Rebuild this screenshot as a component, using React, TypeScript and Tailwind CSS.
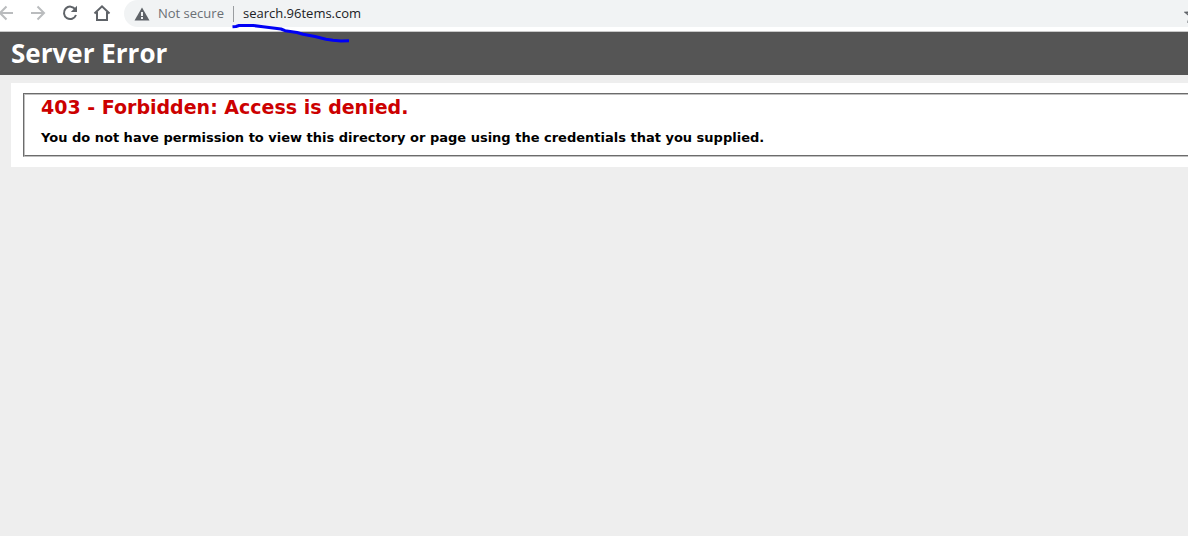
import type { ReactNode } from "react";

interface NavButtonProps {
  label: string;
  disabled?: boolean;
  children: ReactNode;
}

function NavButton({ label, disabled = false, children }: NavButtonProps) {
  return (
    <button
      type="button"
      aria-label={label}
      disabled={disabled}
      className="grid h-[26px] w-8 shrink-0 place-items-center text-[#5f6368] disabled:text-[#babcbe]"
    >
      <svg width="20" height="20" viewBox="0 0 20 20" fill="none" stroke="currentColor" strokeWidth="2">
        {children}
      </svg>
    </button>
  );
}

function Toolbar() {
  return (
    <header className="relative flex h-8 items-start border-b border-[#c8c8c8] bg-white">
      <nav className="-ml-2.5 flex pr-1.5" aria-label="Browser navigation">
        <NavButton label="Back" disabled>
          <path d="M17 10H4M10.5 3.5L4 10l6.500 6.500" />
        </NavButton>
        <NavButton label="Forward" disabled>
          <path d="M3 10h13M9.500 3.500L16 10l-6.500 6.500" />
        </NavButton>
        <NavButton label="Reload">
          <path d="M15.300 6.300A6.200 6.200 0 1 0 16 12" />
          <path d="M17 2.800V9h-6.200z" fill="currentColor" stroke="none" />
        </NavButton>
        <NavButton label="Home">
          <path d="M2.500 10.500L10 3.300l7.500 7.200M5 9v8h10V9" />
        </NavButton>
      </nav>

      <div className="flex h-[27px] min-w-0 flex-1 items-center overflow-hidden rounded-l-full bg-[#f1f3f4] pl-2.5 font-['Open_Sans',sans-serif] text-[13px]">
        <svg width="16" height="14" viewBox="0 0 16 14" className="shrink-0" aria-hidden="true">
          <path d="M8 0.500L15.500 13.500H0.500z" fill="#5f6368" />
          <path d="M7 5h2v4H7zM7 10h2v2H7z" fill="#f1f3f4" />
        </svg>
        <span className="ml-2 shrink-0 text-[#6b6f74]">Not secure</span>
        <span className="ml-[9px] h-4 w-px shrink-0 bg-[#9a9da0]" />
        <input
          type="text"
          aria-label="Address"
          defaultValue="search.96tems.com"
          className="ml-[9px] min-w-0 flex-1 bg-transparent text-[#202124] outline-none"
        />
        <button type="button" aria-label="Bookmark this page" className="-mr-3.5 shrink-0">
          <svg width="18" height="18" viewBox="0 0 18 18" fill="none" stroke="#5f6368" strokeWidth="1.6">
            <path d="M9 2l2 5 5.500.4-4.200 3.500 1.300 5.300L9 13.300l-4.600 2.900 1.300-5.300L1.500 7.400 7 7z" />
          </svg>
        </button>
      </div>

      {/* pen stroke under the address */}
      <svg
        width="120"
        height="22"
        viewBox="0 0 120 22"
        fill="none"
        className="pointer-events-none absolute top-[22px] left-[231px]"
        aria-hidden="true"
      >
        <path
          d="M1.500 4.700L5 4.500L8 3.500L22 3.500L32 4.700L42 6L50 7L54 8.700L66 10.500L72 12.300L84 14.500L95 17.300L102 18.300L110 19L118 18.700"
          stroke="#0000f5"
          strokeWidth="3"
          strokeLinejoin="round"
        />
      </svg>
    </header>
  );
}

export default function App() {
  return (
    <div className="min-h-screen overflow-hidden bg-[#eeeeee]">
      <Toolbar />
      <div className="bg-[#555555] px-[11px] py-1">
        <h1 className="font-['Open_Sans',sans-serif] text-[26px] leading-[35px] font-bold text-white">
          Server Error
        </h1>
      </div>
      <main className="mt-2 ml-[11px] bg-white py-2.5 pl-3 font-['DejaVu_Sans',sans-serif] font-bold">
        <fieldset className="border-2 border-r-0 border-[#c0c0c0] px-4 pb-2 [border-style:groove]">
          <h2 className="text-[19px] leading-6 text-[#cc0000]">403 - Forbidden: Access is denied.</h2>
          <h3 className="mt-2.5 text-[13px] leading-[18px] text-black">
            You do not have permission to view this directory or page using the credentials that you supplied.
          </h3>
        </fieldset>
      </main>
    </div>
  );
}
